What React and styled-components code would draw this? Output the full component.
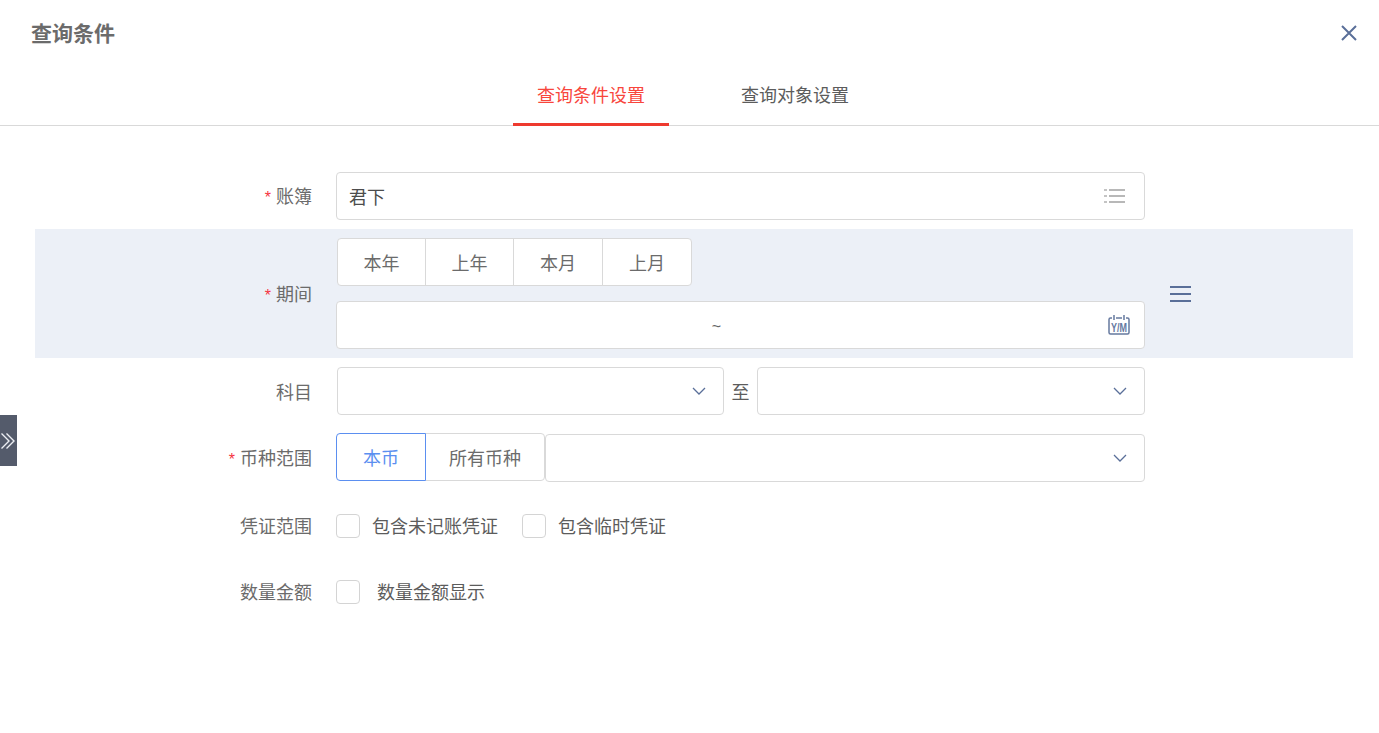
import React from "react";
import styled, { createGlobalStyle } from "styled-components";

const GlobalStyle = createGlobalStyle`
  html, body {
    margin: 0;
    padding: 0;
    background: #fff;
  }
  body {
    font-family: "Noto Sans CJK SC", "Liberation Sans", sans-serif;
    font-size: 18px;
    color: #5c5c5c;
  }
  * {
    box-sizing: border-box;
  }
`;

const Page = styled.div`
  position: relative;
  width: 1379px;
  height: 733px;
  overflow: hidden;
`;

const Header = styled.div`
  height: 66px;
  padding: 0 21px 0 31px;
  display: flex;
  align-items: center;
  justify-content: space-between;
`;

const Title = styled.h1`
  margin: 0 0 3px;
  font-size: 21px;
  line-height: 30px;
  font-weight: 700;
  color: #6b6b6b;
`;

const CloseButton = styled.div`
  width: 18px;
  height: 18px;
  display: flex;
`;

const Tabs = styled.div`
  height: 60px;
  padding-left: 7px;
  display: flex;
  justify-content: center;
  gap: 48px;
  border-bottom: 1px solid #d9d9d9;
`;

const Tab = styled.div`
  width: 156px;
  height: 60px;
  padding-bottom: 2px;
  display: flex;
  align-items: center;
  justify-content: center;
  color: ${(p) => (p.$active ? "#f8463c" : "#5c5c5c")};
  border-bottom: 3px solid ${(p) => (p.$active ? "#ee3a2f" : "transparent")};
`;

const Form = styled.div`
  padding: 46px 26px 0 35px;
`;

const Row = styled.div`
  display: flex;
  align-items: center;
  margin-top: ${(p) => p.$top || 0}px;
  padding: ${(p) => (p.$highlight ? "9px 0" : "0")};
  background: ${(p) => (p.$highlight ? "#ecf0f7" : "transparent")};
`;

const Label = styled.div`
  width: 277px;
  margin-right: 24px;
  margin-top: ${(p) => p.$shift || 0}px;
  flex: none;
  text-align: right;
  line-height: 24px;
  color: #6b6b6b;
`;

const Star = styled.span`
  margin-right: 5px;
  font-size: 16px;
  color: #f5333f;
  font-family: "Liberation Sans", sans-serif;
`;

const Control = styled.div`
  width: 809px;
  flex: none;
  display: flex;
  flex-direction: ${(p) => (p.$column ? "column" : "row")};
  align-items: ${(p) => (p.$column ? "flex-start" : p.$top ? "flex-start" : "center")};
  gap: ${(p) => p.$gap || 0}px;
`;

const Field = styled.div`
  width: ${(p) => (p.$width ? `${p.$width}px` : "auto")};
  flex: ${(p) => (p.$width ? "none" : "1")};
  height: 48px;
  padding: 0 13px 0 12px;
  margin-left: ${(p) => p.$left || 0}px;
  margin-top: ${(p) => p.$down || 0}px;
  display: flex;
  align-items: center;
  background: #fff;
  border: 1px solid #d9d9d9;
  border-radius: 4px;
`;

const FieldText = styled.span`
  flex: 1;
  color: #4c4c4c;
`;

const Tilde = styled.span`
  flex: 1;
  padding: 3px 24px 0 0;
  text-align: center;
  font-family: "Liberation Sans", sans-serif;
  font-size: 16px;
  line-height: 18px;
  color: #666;
`;

const IconSlot = styled.span`
  display: flex;
  margin-right: ${(p) => p.$right || 0}px;
`;

const ButtonGroup = styled.div`
  display: flex;
  margin-left: ${(p) => p.$left || 0}px;
`;

const SegButton = styled.div`
  width: ${(p) => p.$width}px;
  height: 48px;
  margin-left: -1px;
  display: flex;
  align-items: center;
  justify-content: center;
  position: relative;
  z-index: ${(p) => (p.$active ? 1 : 0)};
  background: #fff;
  border: 1px solid ${(p) => (p.$active ? "#5b8ff0" : "#d9d9d9")};
  color: ${(p) => (p.$active ? "#5b8ff0" : "#6b6b6b")};
  &:first-child {
    margin-left: 0;
    border-radius: 4px 0 0 4px;
  }
  &:last-child {
    border-radius: 0 4px 4px 0;
  }
`;

const Connector = styled.span`
  width: 33px;
  flex: none;
  text-align: center;
`;

const RowMenu = styled.div`
  margin-left: 25px;
  display: flex;
`;

const Check = styled.label`
  display: flex;
  align-items: center;
  margin-right: 24px;
`;

const CheckText = styled.span`
  line-height: 22px;
  margin-bottom: 2px;
`;

const Box = styled.span`
  width: 24px;
  height: 24px;
  flex: none;
  margin-right: ${(p) => p.$gap || 12}px;
  background: #fff;
  border: 1px solid #d4d4d4;
  border-radius: 4px;
`;

const SideHandle = styled.div`
  position: absolute;
  left: 0;
  top: 415px;
  width: 17px;
  height: 51px;
  background: #545b6b;
  display: flex;
  align-items: center;
`;

const IconSvg = styled.svg`
  overflow: visible;
`;

const CloseIcon = () => (
  <svg width="18" height="18" viewBox="0 0 18 18" fill="none" stroke="#5a6f99" strokeWidth="2">
    <path d="M2 2l14 14M16 2L2 16" />
  </svg>
);

const ListIcon = () => (
  <svg width="22" height="16" viewBox="0 0 22 16" fill="none" strokeWidth="2">
    <path d="M5 2h16M5 8h16M5 14h16" stroke="#b8b8b8" />
    <path d="M0 2h3M0 8h3M0 14h3" stroke="#c4c4c4" />
  </svg>
);

const CalendarIcon = () => (
  <IconSvg width="22" height="20" viewBox="0 0 22 20" fill="none" stroke="#66799f" strokeWidth="1.5">
    <path d="M4 3H2.500A1.500 1.500 0 0 0 1 4.500v13A1.500 1.500 0 0 0 2.500 19h17a1.500 1.500 0 0 0 1.500-1.500v-13A1.500 1.500 0 0 0 19.500 3H18" />
    <path d="M8 3h6M6 0v5M16 0v5" />
    <text
      x="11"
      y="16.500"
      textAnchor="middle"
      textLength="16"
      lengthAdjust="spacingAndGlyphs"
      fontSize="12"
      fontWeight="700"
      fontFamily="Liberation Sans, sans-serif"
      fill="#66799f"
      stroke="none"
    >
      Y/M
    </text>
  </IconSvg>
);

const ChevronIcon = () => (
  <svg width="14" height="8" viewBox="0 0 14 8" fill="none" stroke="#5a6f99" strokeWidth="1.3">
    <path d="M1 1l6 6 6-6" />
  </svg>
);

const MenuIcon = () => (
  <svg width="21" height="16" viewBox="0 0 21 16" fill="none" stroke="#5a6f99" strokeWidth="2">
    <path d="M0 1h21M0 8h21M0 15h21" />
  </svg>
);

const DoubleChevron = () => (
  <svg width="17" height="18" viewBox="0 0 17 18" fill="none" stroke="#eceef3" strokeWidth="1.400">
    <path d="M1.500 1.500L9 9l-7.500 7.500M6.500 1.500L14 9l-7.500 7.500" />
  </svg>
);

const SelectField = ({ width, down }) => (
  <Field $width={width} $down={down}>
    <FieldText />
    <IconSlot $right={4}>
      <ChevronIcon />
    </IconSlot>
  </Field>
);

const App = () => {
  return (
    <Page>
      <GlobalStyle />
      <Header>
        <Title>查询条件</Title>
        <CloseButton>
          <CloseIcon />
        </CloseButton>
      </Header>
      <Tabs>
        <Tab $active>查询条件设置</Tab>
        <Tab>查询对象设置</Tab>
      </Tabs>
      <Form>
        <Row>
          <Label>
            <Star>*</Star>账簿
          </Label>
          <Control>
            <Field>
              <FieldText>君下</FieldText>
              <IconSlot $right={5}>
                <ListIcon />
              </IconSlot>
            </Field>
          </Control>
        </Row>
        <Row $top={9} $highlight>
          <Label $shift={2}>
            <Star>*</Star>期间
          </Label>
          <Control $column $gap={15}>
            <ButtonGroup $left={1}>
              <SegButton $width={89}>本年</SegButton>
              <SegButton $width={89}>上年</SegButton>
              <SegButton $width={90}>本月</SegButton>
              <SegButton $width={90}>上月</SegButton>
            </ButtonGroup>
            <Field $width={809}>
              <Tilde>~</Tilde>
              <IconSlot $right={1}>
                <CalendarIcon />
              </IconSlot>
            </Field>
          </Control>
          <RowMenu>
            <MenuIcon />
          </RowMenu>
        </Row>
        <Row $top={9}>
          <Label>科目</Label>
          <Control>
            <Field $width={387} $left={1}>
              <FieldText />
              <IconSlot $right={4}>
                <ChevronIcon />
              </IconSlot>
            </Field>
            <Connector>至</Connector>
            <SelectField width={388} />
          </Control>
        </Row>
        <Row $top={18}>
          <Label $shift={2}>
            <Star>*</Star>币种范围
          </Label>
          <Control $top>
            <ButtonGroup>
              <SegButton $width={90} $active>
                本币
              </SegButton>
              <SegButton $width={120}>所有币种</SegButton>
            </ButtonGroup>
            <SelectField width={600} down={1} />
          </Control>
        </Row>
        <Row $top={32}>
          <Label $shift={-2}>凭证范围</Label>
          <Control>
            <Check>
              <Box />
              <CheckText>包含未记账凭证</CheckText>
            </Check>
            <Check>
              <Box />
              <CheckText>包含临时凭证</CheckText>
            </Check>
          </Control>
        </Row>
        <Row $top={42}>
          <Label $shift={-2}>数量金额</Label>
          <Control>
            <Check>
              <Box $gap={17} />
              <CheckText>数量金额显示</CheckText>
            </Check>
          </Control>
        </Row>
      </Form>
      <SideHandle>
        <DoubleChevron />
      </SideHandle>
    </Page>
  );
};

export default App;
